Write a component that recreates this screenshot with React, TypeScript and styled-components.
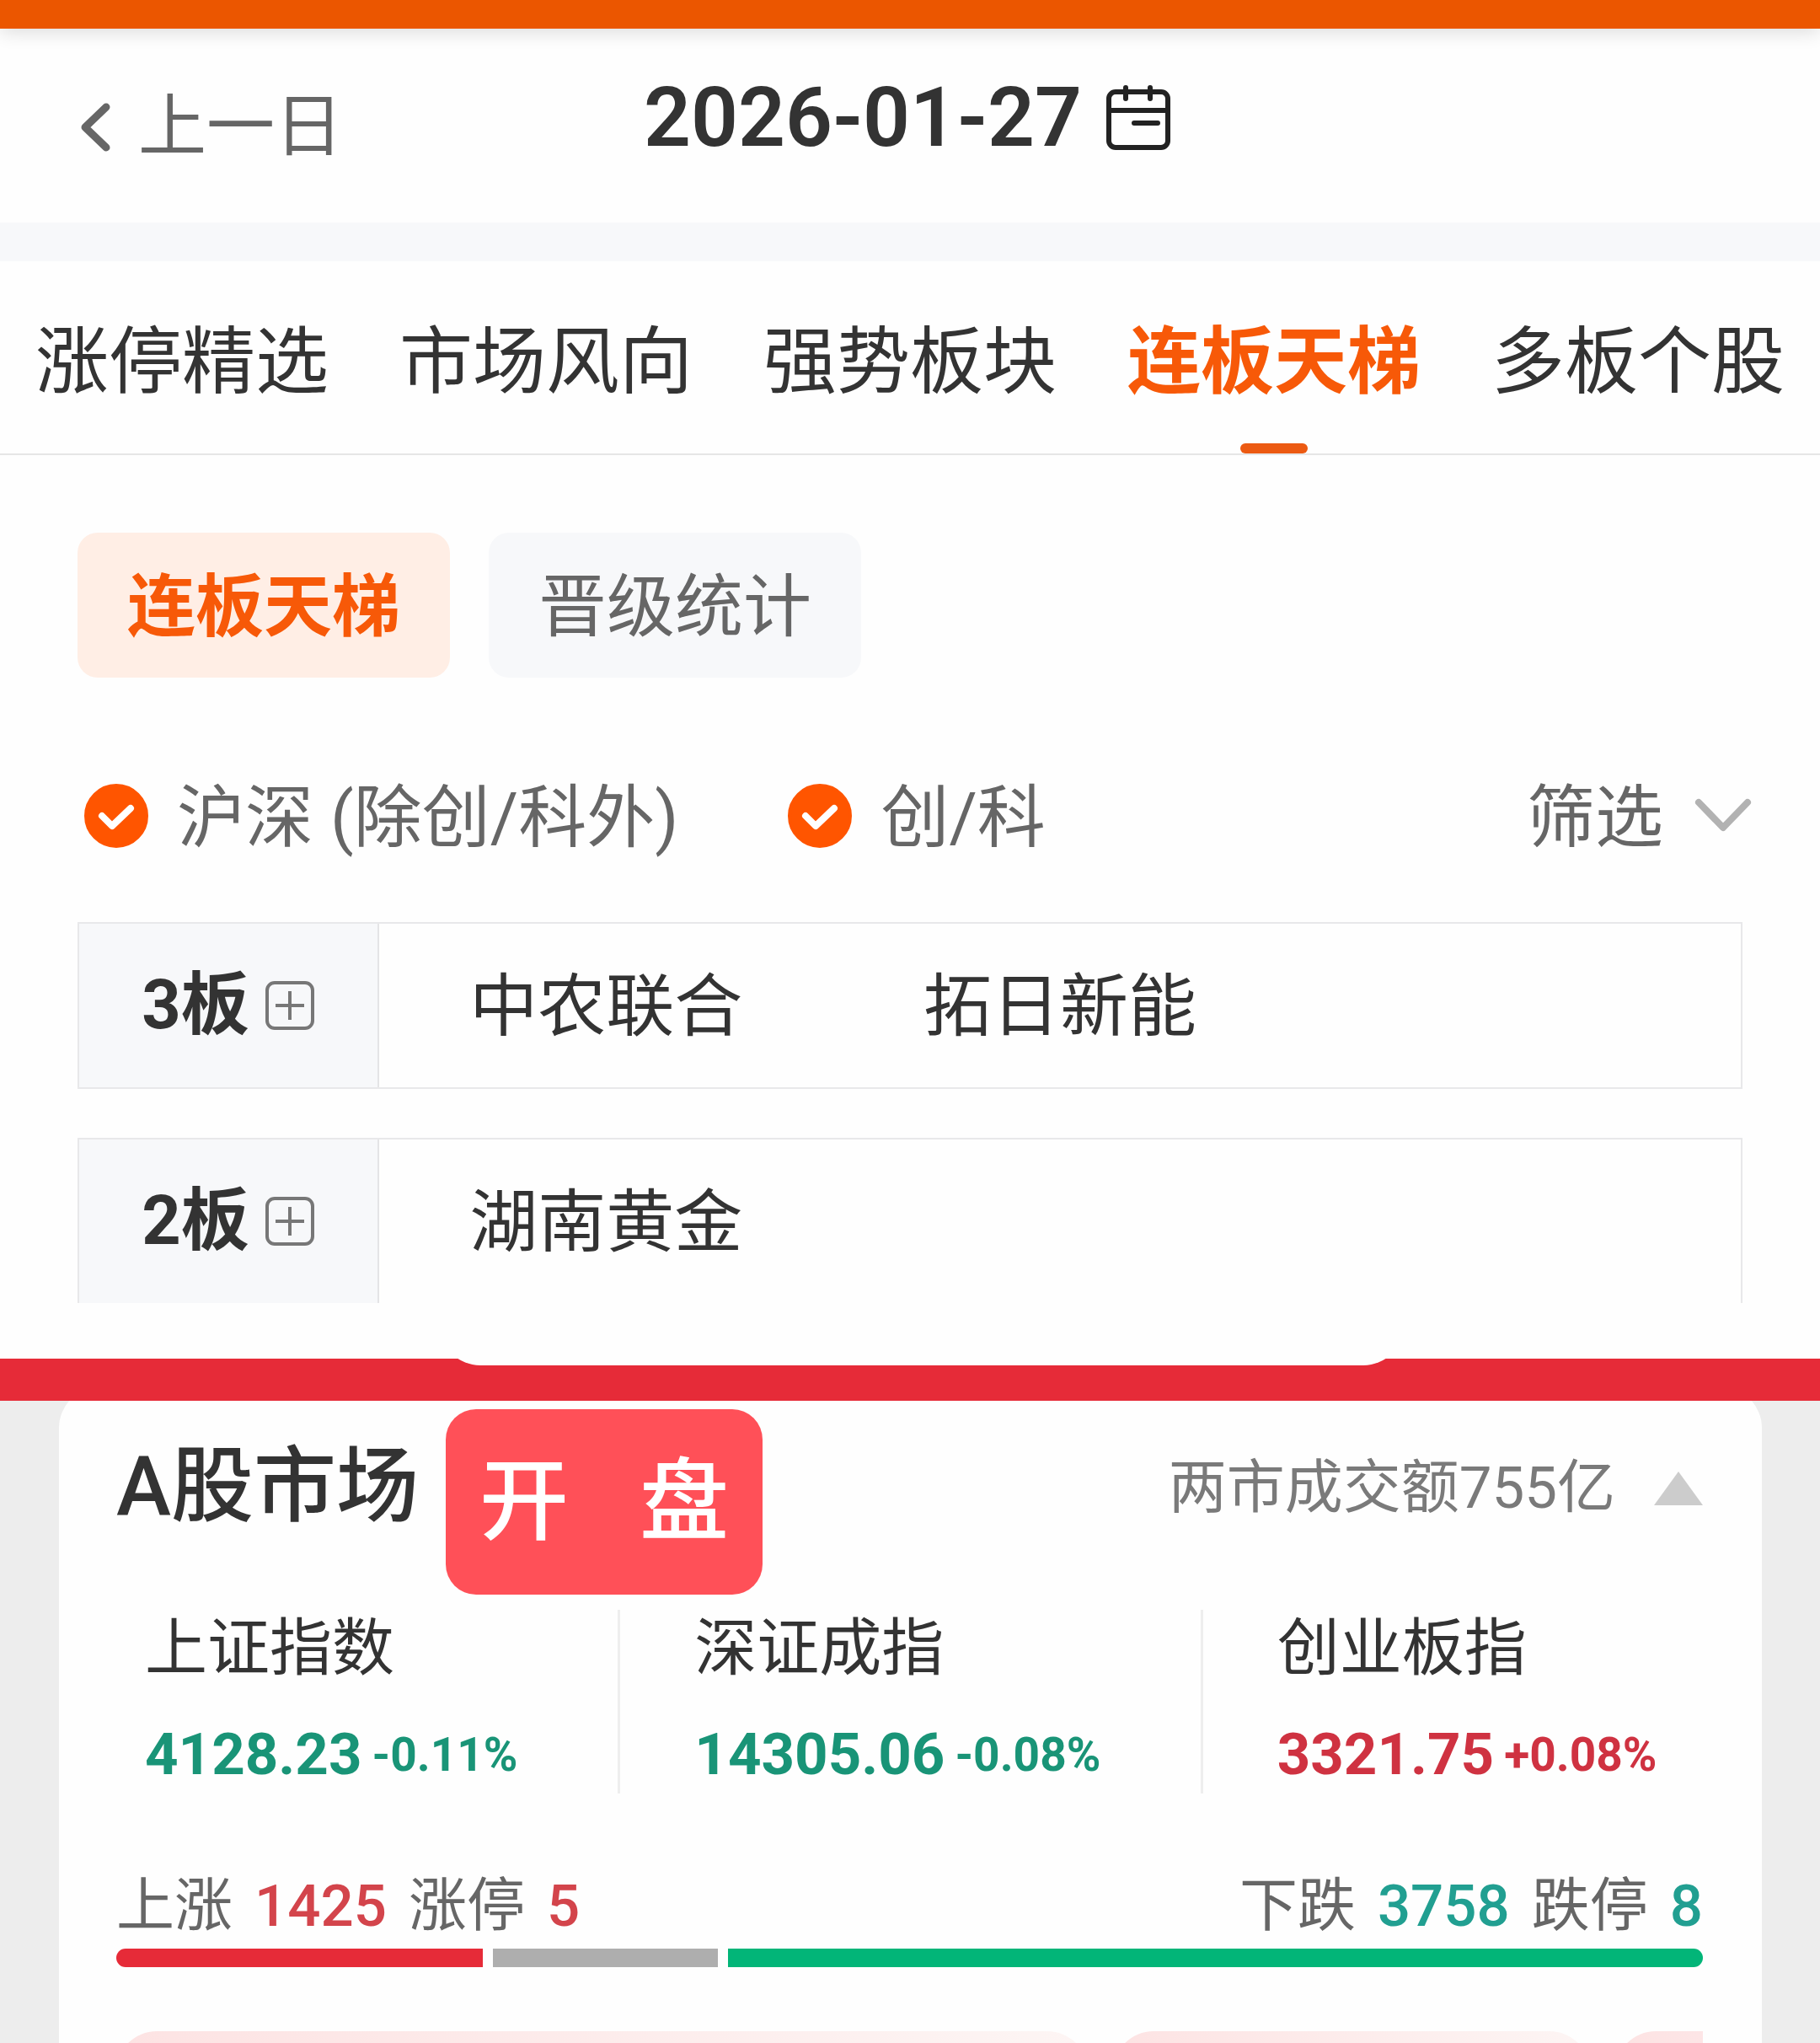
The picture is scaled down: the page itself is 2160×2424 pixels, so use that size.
import React, { useState } from "react";
import styled, { createGlobalStyle, css } from "styled-components";

const GlobalStyle = createGlobalStyle`
  * { box-sizing: border-box; }
  body {
    margin: 0;
    background: #fefefe;
    color: #333;
    font-family: Roboto, "Noto Sans CJK SC", sans-serif;
    font-size: 81px;
    line-height: 100px;
  }
  button {
    border: 0;
    padding: 0;
    background: none;
    color: inherit;
    font: inherit;
    white-space: nowrap;
    cursor: pointer;
  }
`;

const Page = styled.main`
  overflow: hidden;
`;

const TopBar = styled.div`
  height: 34px;
  background: #eb5600;
  box-shadow: 0 4px 22px rgba(0, 0, 0, 0.14);
`;

const DateBar = styled.header`
  display: grid;
  grid-template-columns: 1fr auto 1fr;
  align-items: center;
  height: 230px;
  padding: 4px 98px 0 92px;
`;

const PrevDay = styled.button`
  display: flex;
  align-items: center;
  justify-self: start;
  gap: 30px;
  color: #666;
`;

const DatePicker = styled.button`
  display: flex;
  align-items: center;
  gap: 28px;
  padding-bottom: 22px;
  font-size: 98px;
  font-weight: 600;
`;

const Band = styled.div`
  height: 46px;
  background: #f7f8fa;
`;

const Tabs = styled.nav`
  display: flex;
  justify-content: space-between;
  height: 230px;
  padding: 0 42px;
  border-bottom: 2px solid #e6e6e6;
  font-size: 87px;
`;

const Tab = styled.button<{ $active: boolean }>`
  display: flex;
  flex-direction: column;
  align-items: center;
  justify-content: space-between;
  padding-top: 70px;
  ${(p) =>
    p.$active &&
    css`
      color: #f75908;
      font-weight: 700;
      &::after {
        content: "";
        width: 80px;
        height: 12px;
        border-radius: 6px;
        background: #ec5a12;
      }
    `}
`;

const Chips = styled.div`
  display: flex;
  gap: 46px;
  padding: 92px 92px 0;
`;

const Chip = styled.button<{ $active: boolean }>`
  height: 172px;
  padding: 6px 59px 0;
  border-radius: 24px;
  background: ${(p) => (p.$active ? "#ffeee5" : "#f7f8fa")};
  color: ${(p) => (p.$active ? "#f75908" : "#666")};
  font-weight: ${(p) => (p.$active ? 700 : 400)};
`;

const Filters = styled.div`
  display: flex;
  align-items: center;
  gap: 130px;
  height: 290px;
  padding: 38px 80px 0 100px;
  color: #666;
`;

const CheckLabel = styled.label`
  display: flex;
  align-items: center;
  gap: 34px;
  white-space: nowrap;
`;

const LabelText = styled.span`
  padding-top: 6px;
`;

const CheckBox = styled.span`
  display: grid;
  width: 76px;
  height: 76px;
  > * {
    grid-area: 1 / 1;
  }
  svg {
    pointer-events: none;
  }
`;

const CheckInput = styled.input`
  appearance: none;
  width: 76px;
  height: 76px;
  margin: 0;
  border: 4px solid #ccc;
  border-radius: 50%;
  &:checked {
    border-color: #ff5500;
    background: #ff5500;
  }
`;

const FilterButton = styled.button`
  display: flex;
  align-items: center;
  gap: 36px;
  margin-left: auto;
`;

const Ladder = styled.section`
  display: flex;
  flex-direction: column;
  gap: 58px;
  padding: 0 92px 66px;
`;

const Rung = styled.div<{ $open: boolean }>`
  display: grid;
  grid-template-columns: 356px 1fr;
  height: 198px;
  border: 2px solid #e8e8ea;
  ${(p) => p.$open && "border-bottom: 0; height: 196px;"}
`;

const RungHead = styled.div`
  display: flex;
  align-items: center;
  justify-content: center;
  gap: 18px;
  border-right: 2px solid #e4e4e6;
  background: #f7f8fa;
  font-weight: 700;
`;

const ExpandButton = styled.button`
  display: flex;
`;

const Stocks = styled.div`
  display: grid;
  grid-template-columns: repeat(3, 1fr);
  align-items: center;
  justify-items: center;
  padding-top: 4px;
`;

const Stock = styled.a`
  color: inherit;
  text-decoration: none;
`;

const RedBar = styled.div`
  height: 50px;
  padding-left: 522px;
  padding-right: 494px;
  background: #e62b38;
  overflow: hidden;
`;

const SheetEdge = styled.div`
  height: 108px;
  margin-top: -100px;
  border-radius: 48px;
  background: #fefefe;
`;

const Market = styled.section`
  padding: 0 69px 0 70px;
  background: #ededed;
  overflow: hidden;
`;

const MarketCard = styled.div`
  margin-top: -16px;
  padding: 26px 70px 0 68px;
  border-radius: 48px 48px 0 0;
  background: #fefefe;
`;

const MarketHead = styled.div`
  display: flex;
  align-items: flex-start;
  gap: 32px;
  height: 238px;
  line-height: 184px;
`;

const MarketTitle = styled.h2`
  margin: 0;
  font-size: 98px;
  font-weight: 500;
`;

const Badge = styled.span`
  display: flex;
  justify-content: space-between;
  width: 376px;
  padding: 0 40px;
  border-radius: 36px;
  background: #ff5058;
  color: #fff;
  font-size: 106px;
  font-weight: 500;
  line-height: 220px;
`;

const Turnover = styled.button`
  display: flex;
  align-items: center;
  gap: 46px;
  margin-left: auto;
  color: #7a7a7a;
  font-size: 69px;
  line-height: 188px;
`;

const Indices = styled.div`
  display: grid;
  grid-template-columns: 598fr 691fr 593fr;
`;

const IndexCell = styled.div`
  height: 218px;
  padding-left: 88px;
  border-right: 3px solid #eee;
  &:first-child {
    padding-left: 34px;
  }
  &:last-child {
    border-right: 0;
  }
`;

const IndexName = styled.div`
  font-size: 74px;
  line-height: 92px;
`;

const Quote = styled.div<{ $up: boolean }>`
  display: flex;
  align-items: center;
  gap: 12px;
  padding-top: 40px;
  color: ${(p) => (p.$up ? "#cf3241" : "#199477")};
  font-size: 69px;
  font-weight: 700;
  line-height: 80px;
  white-space: nowrap;
`;

const Change = styled.span`
  font-size: 55px;
`;

const Breadth = styled.div`
  display: flex;
  justify-content: space-between;
  padding-top: 88px;
  color: #666;
  font-size: 69px;
  line-height: 92px;
`;

const BreadthSide = styled.div`
  display: flex;
  gap: 26px;
`;

const Count = styled.b<{ $up: boolean }>`
  color: ${(p) => (p.$up ? "#d3444b" : "#219f91")};
  font-weight: 500;
`;

const BreadthBar = styled.div`
  display: flex;
  gap: 12px;
  height: 22px;
  margin-top: 4px;
  border-radius: 11px;
  overflow: hidden;
`;

const Segment = styled.span<{ $share: number; $color: string }>`
  flex: ${(p) => p.$share};
  background: ${(p) => p.$color};
`;

const TopicStrip = styled.div`
  display: grid;
  grid-template-columns: 1152fr 566fr 104fr;
  gap: 30px;
  height: 14px;
  margin-top: 76px;
  overflow: hidden;
`;

const Topic = styled.div<{ $clipped?: boolean }>`
  height: 120px;
  border-radius: ${(p) => (p.$clipped ? "48px 0 0 48px" : "48px")};
  background: linear-gradient(90deg, #fde3e3, ${(p) => (p.$clipped ? "#fde5e6" : "#fdf5f4")});
`;

const tabs = ["涨停精选", "市场风向", "强势板块", "连板天梯", "多板个股"];
const chips = ["连板天梯", "晋级统计"];
const boards = ["沪深 (除创/科外)", "创/科"];
const rungs = [
  { level: "3板", stocks: ["中农联合", "拓日新能"] },
  { level: "2板", stocks: ["湖南黄金"] },
];
const indices = [
  { name: "上证指数", value: "4128.23", change: "-0.11%", up: false },
  { name: "深证成指", value: "14305.06", change: "-0.08%", up: false },
  { name: "创业板指", value: "3321.75", change: "+0.08%", up: true },
];

const CheckOption = ({ label }: { label: string }) => (
  <CheckLabel>
    <CheckBox>
      <CheckInput type="checkbox" defaultChecked />
      <svg width="76" height="76" viewBox="0 0 76 76" fill="none" aria-hidden="true">
        <path d="M21 38l12 12 22-21" stroke="#fff" strokeWidth="8" strokeLinecap="round" strokeLinejoin="round" />
      </svg>
    </CheckBox>
    <LabelText>{label}</LabelText>
  </CheckLabel>
);

export default function App() {
  const [tab, setTab] = useState(3);
  const [chip, setChip] = useState(0);

  return (
    <Page>
      <GlobalStyle />
      <TopBar />
      <DateBar>
        <PrevDay>
          <svg width="42" height="62" viewBox="0 0 42 62" fill="none" aria-hidden="true">
            <path d="M34 7L9 31l25 24" stroke="#666" strokeWidth="9" strokeLinecap="round" strokeLinejoin="round" />
          </svg>
          上一日
        </PrevDay>
        <DatePicker>
          2026-01-27
          <svg width="78" height="78" viewBox="0 0 78 78" fill="none" stroke="#222" strokeWidth="6" aria-hidden="true">
            <rect x="4" y="8" width="70" height="66" rx="8" />
            <path d="M4 30h70" />
            <path d="M24 3v13M53 3v13M34 45h28" strokeLinecap="round" />
          </svg>
        </DatePicker>
      </DateBar>
      <Band />
      <Tabs>
        {tabs.map((name, i) => (
          <Tab key={name} $active={i === tab} onClick={() => setTab(i)}>
            {name}
          </Tab>
        ))}
      </Tabs>
      <Chips>
        {chips.map((name, i) => (
          <Chip key={name} $active={i === chip} onClick={() => setChip(i)}>
            {name}
          </Chip>
        ))}
      </Chips>
      <Filters>
        {boards.map((label) => (
          <CheckOption key={label} label={label} />
        ))}
        <FilterButton>
          <LabelText>筛选</LabelText>
          <svg width="70" height="46" viewBox="0 0 70 46" fill="none" aria-hidden="true">
            <path d="M6 7l29 30L64 7" stroke="#b2b2b2" strokeWidth="8" strokeLinecap="round" strokeLinejoin="round" />
          </svg>
        </FilterButton>
      </Filters>
      <Ladder>
        {rungs.map(({ level, stocks }, i) => (
          <Rung key={level} $open={i === rungs.length - 1}>
            <RungHead>
              {level}
              <ExpandButton aria-label="展开">
                <svg width="60" height="60" viewBox="0 0 60 60" fill="none" stroke="#777" strokeWidth="4" aria-hidden="true">
                  <rect x="3" y="3" width="54" height="54" rx="9" />
                  <path d="M30 13v34M13 30h34" />
                </svg>
              </ExpandButton>
            </RungHead>
            <Stocks>
              {stocks.map((name) => (
                <Stock key={name} href="#">
                  {name}
                </Stock>
              ))}
            </Stocks>
          </Rung>
        ))}
      </Ladder>
      <RedBar>
        <SheetEdge />
      </RedBar>
      <Market>
        <MarketCard>
          <MarketHead>
            <MarketTitle>A股市场</MarketTitle>
            <Badge>
              <span>开</span>
              <span>盘</span>
            </Badge>
            <Turnover>
              两市成交额755亿
              <svg width="58" height="40" viewBox="0 0 58 40" aria-hidden="true">
                <path d="M29 0l29 40H0z" fill="#ccc" />
              </svg>
            </Turnover>
          </MarketHead>
          <Indices>
            {indices.map(({ name, value, change, up }) => (
              <IndexCell key={name}>
                <IndexName>{name}</IndexName>
                <Quote $up={up}>
                  {value}
                  <Change>{change}</Change>
                </Quote>
              </IndexCell>
            ))}
          </Indices>
          <Breadth>
            <BreadthSide>
              <span>上涨</span>
              <Count $up>1425</Count>
              <span>涨停</span>
              <Count $up>5</Count>
            </BreadthSide>
            <BreadthSide>
              <span>下跌</span>
              <Count $up={false}>3758</Count>
              <span>跌停</span>
              <Count $up={false}>8</Count>
            </BreadthSide>
          </Breadth>
          <BreadthBar>
            <Segment $share={435} $color="#e62b38" />
            <Segment $share={266} $color="#aeaeae" />
            <Segment $share={1156} $color="#02b578" />
          </BreadthBar>
          <TopicStrip>
            <Topic />
            <Topic />
            <Topic $clipped />
          </TopicStrip>
        </MarketCard>
      </Market>
    </Page>
  );
}
